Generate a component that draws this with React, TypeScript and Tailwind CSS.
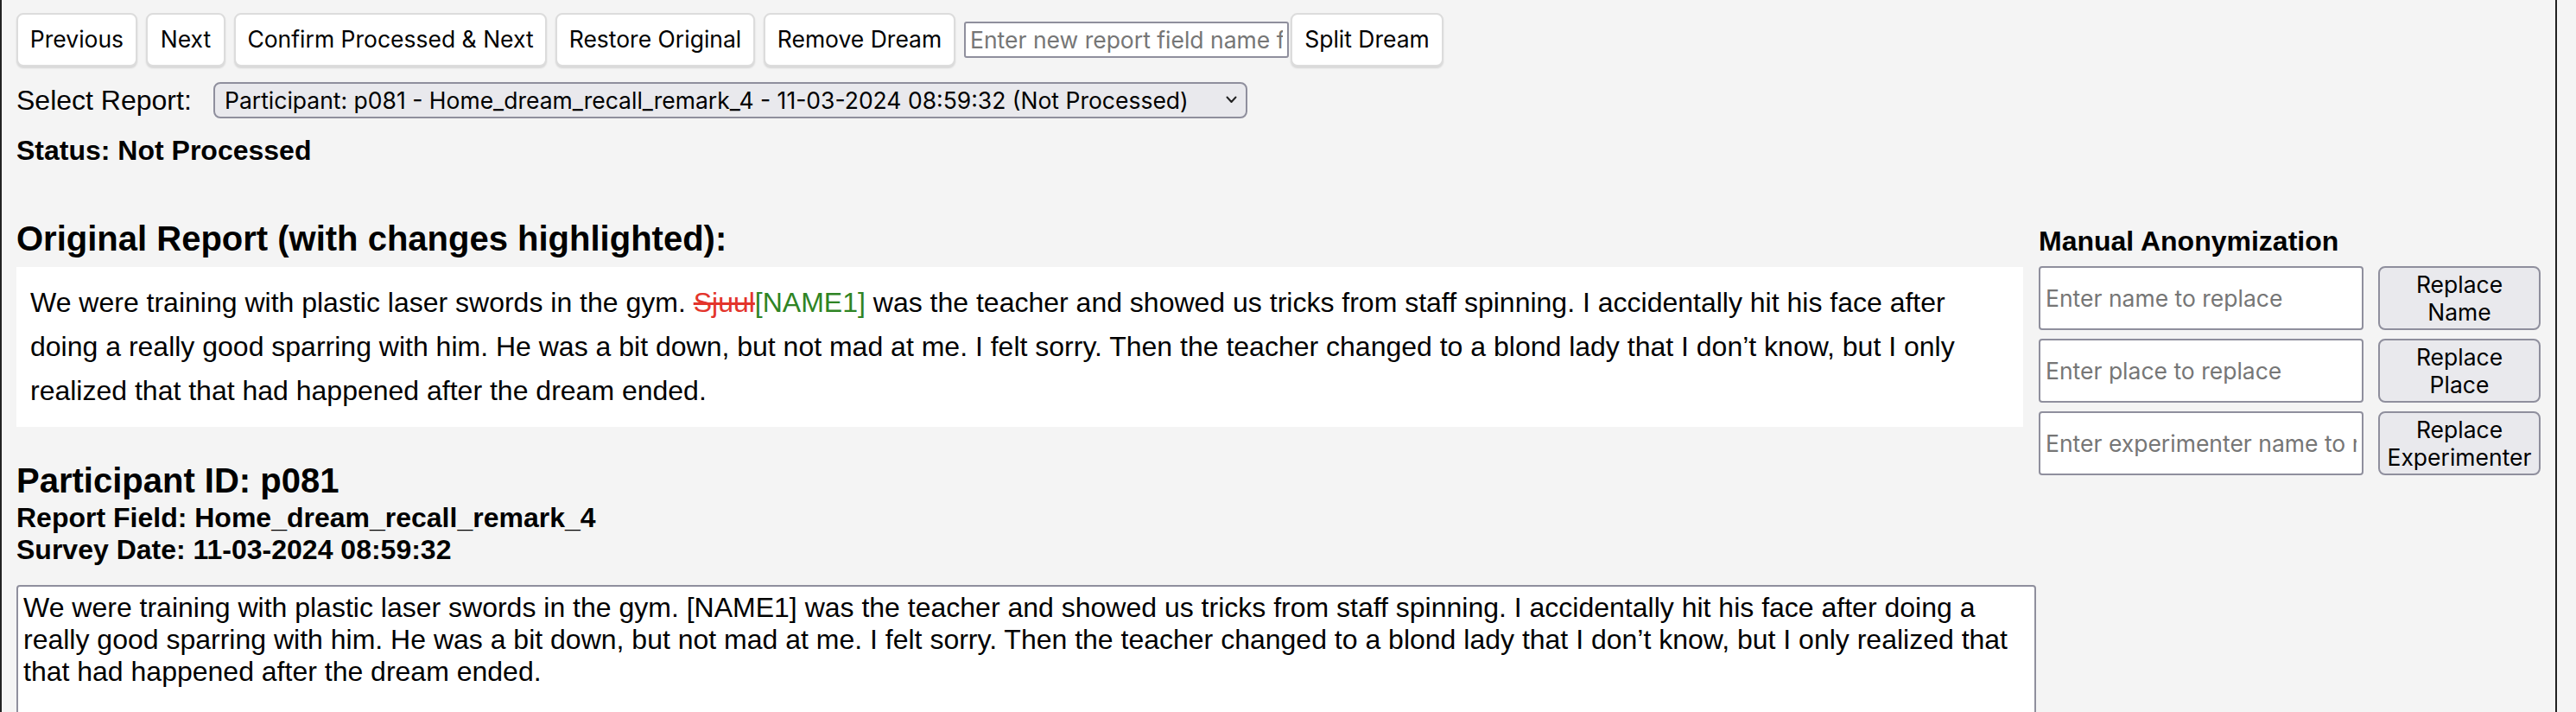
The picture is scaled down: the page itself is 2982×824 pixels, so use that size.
import { useState } from "react";

const reportText =
    "We were training with plastic laser swords in the gym. [NAME1] was the teacher and showed us tricks from staff spinning. I accidentally hit his face after doing a really good sparring with him. He was a bit down, but not mad at me. I felt sorry. Then the teacher changed to a blond lady that I don’t know, but I only realized that that had happened after the dream ended.";

const toolButton =
    "h-[62px] shrink-0 bg-white border-2 border-[#dcdcdc] rounded-[8px] shadow-[0_2px_2px_rgba(0,0,0,0.12)] text-[26.5px] text-black font-['Inter',sans-serif] mr-[10px]";

const sideInput =
    "w-[376px] h-[74px] bg-white border-2 border-[#8f8f9d] rounded-[4px] px-[6px] text-[26.5px] font-['Inter',sans-serif] placeholder:text-[#767676] outline-none";

const sideButton =
    "w-[188px] h-[74px] bg-[#e9e9ed] border-2 border-[#8f8f9d] rounded-[8px] text-[26.5px] leading-[32px] text-black font-['Inter',sans-serif]";

export default function App() {
    const [fieldName, setFieldName] = useState("");
    const [name, setName] = useState("");
    const [place, setPlace] = useState("");
    const [experimenter, setExperimenter] = useState("");
    const [text, setText] = useState(reportText);

    return (
        <div className="min-h-screen bg-[#f4f4f4] font-['Liberation_Sans',Arial,sans-serif] text-black">
            <div className="w-[2960px] min-h-[824px] border-x-2 border-[#222] px-[17px] pt-[15px]">
                {/* toolbar */}
                <div className="flex items-center h-[62px]">
                    <button className={`${toolButton} w-[140px]`}>Previous</button>
                    <button className={`${toolButton} w-[92px]`}>Next</button>
                    <button className={`${toolButton} w-[362px]`}>Confirm Processed &amp; Next</button>
                    <button className={`${toolButton} w-[231px]`}>Restore Original</button>
                    <button className={`${toolButton} w-[222px]`}>Remove Dream</button>
                    <input
                        type="text"
                        placeholder="Enter new report field name for split"
                        value={fieldName}
                        onChange={(e) => setFieldName(e.target.value)}
                        className="w-[376px] h-[42px] bg-white border-2 border-[#8f8f9d] rounded-[3px] px-[5px] text-[26.5px] font-['Inter',sans-serif] placeholder:text-[#767676] outline-none mr-[2px]"
                    />
                    <button className={`${toolButton} w-[177px]`}>Split Dream</button>
                </div>

                {/* report select */}
                <div className="flex items-center h-[42px] mt-[18px]">
                    <label className="text-[32px] w-[228px]">Select Report:</label>
                    <div className="relative">
                        <select className="appearance-none w-[1197px] h-[42px] bg-[#e9e9ed] border-2 border-[#8f8f9d] rounded-[8px] pl-[11px] text-[26.5px] font-['Inter',sans-serif] text-black outline-none">
                            <option>
                                Participant: p081 - Home_dream_recall_remark_4 - 11-03-2024 08:59:32 (Not Processed)
                            </option>
                        </select>
                        <svg
                            className="absolute right-[12px] top-[16px] pointer-events-none"
                            width="13"
                            height="9"
                            viewBox="0 0 13 9"
                            fill="none"
                        >
                            <path d="M1.5 1.5L6.5 7L11.5 1.5" stroke="#222" strokeWidth="2" strokeLinecap="round" strokeLinejoin="round" />
                        </svg>
                    </div>
                </div>

                <p className="mt-[19px] text-[32px] leading-[37px] font-bold">Status: Not Processed</p>

                <div className="flex items-start gap-[18px] mt-[60px]">
                    {/* left column */}
                    <div className="w-[2323px] shrink-0">
                        <h2 className="text-[40px] leading-[46px] font-bold">
                            Original Report (with changes highlighted):
                        </h2>
                        <div className="mt-[10px] bg-white p-[16px] text-[32px] leading-[51px]">
                            We were training with plastic laser swords in the gym.{" "}
                            <span className="text-[#e3342b] line-through decoration-[#e3342b]">Sjuul</span>
                            <span className="text-[#2f8424]">[NAME1]</span> was the teacher and showed us
                            tricks from staff spinning. I accidentally hit his face after doing a really good
                            sparring with him. He was a bit down, but not mad at me. I felt sorry. Then the
                            teacher changed to a blond lady that I don’t know, but I only realized that that
                            had happened after the dream ended.
                        </div>

                        <h3 className="mt-[39px] text-[40px] leading-[46px] font-bold">Participant ID: p081</h3>
                        <p className="mt-[2px] text-[32px] leading-[37px] font-bold">
                            Report Field: Home_dream_recall_remark_4
                        </p>
                        <p className="text-[32px] leading-[37px] font-bold">Survey Date: 11-03-2024 08:59:32</p>

                        <textarea
                            value={text}
                            onChange={(e) => setText(e.target.value)}
                            className="mt-[22px] w-[2338px] h-[300px] bg-white border-2 border-[#8f8f9d] rounded-[4px] px-[6px] py-[6px] text-[32px] leading-[37px] font-['Liberation_Sans',Arial,sans-serif] text-black outline-none resize-none"
                        />
                    </div>

                    {/* manual anonymization */}
                    <div className="w-[581px] shrink-0 mt-[8px]">
                        <h3 className="text-[32px] leading-[37px] font-bold">Manual Anonymization</h3>
                        <div className="mt-[10px] flex flex-col gap-[10px]">
                            <div className="flex gap-[17px]">
                                <input
                                    type="text"
                                    placeholder="Enter name to replace"
                                    value={name}
                                    onChange={(e) => setName(e.target.value)}
                                    className={sideInput}
                                />
                                <button className={sideButton}>
                                    Replace
                                    <br />
                                    Name
                                </button>
                            </div>
                            <div className="flex gap-[17px]">
                                <input
                                    type="text"
                                    placeholder="Enter place to replace"
                                    value={place}
                                    onChange={(e) => setPlace(e.target.value)}
                                    className={sideInput}
                                />
                                <button className={sideButton}>
                                    Replace
                                    <br />
                                    Place
                                </button>
                            </div>
                            <div className="flex gap-[17px]">
                                <input
                                    type="text"
                                    placeholder="Enter experimenter name to replace"
                                    value={experimenter}
                                    onChange={(e) => setExperimenter(e.target.value)}
                                    className={sideInput}
                                />
                                <button className={sideButton}>
                                    Replace
                                    <br />
                                    Experimenter
                                </button>
                            </div>
                        </div>
                    </div>
                </div>
            </div>
        </div>
    );
}
